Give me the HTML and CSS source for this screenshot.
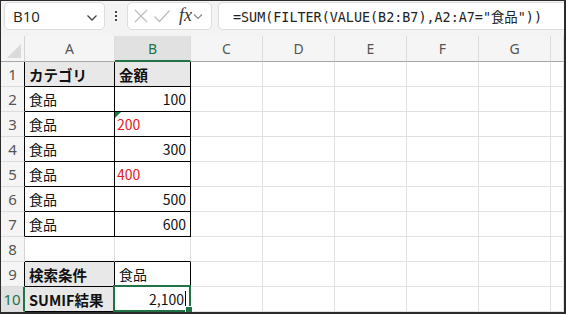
FILE: index.html
```html
<!DOCTYPE html>
<html lang="ja">
  <head>
    <meta charset="utf-8" />
    <title>SUMIF</title>
    <link rel="stylesheet" href="styles.css">
  </head>
  <body>
    <div class="frame">
      <div class="toolbar">
        <div class="namebox">
          <span>B10</span>
          <svg class="chev" width="12" height="8" viewBox="0 0 12 8"><path d="M1.5 1.5 L6 6 L10.5 1.5" fill="none" stroke="#444" stroke-width="1.3"/></svg>
        </div>
        <div class="dots">
          <i></i><i></i><i></i>
        </div>
        <div class="fxbox">
          <svg width="16" height="16" viewBox="0 0 16 16"><path d="M2 2 L14 14 M14 2 L2 14" stroke="#bdbdbd" stroke-width="1.3"/></svg>
          <svg width="18" height="16" viewBox="0 0 18 16"><path d="M1.5 8.5 L6.5 13.5 L16.5 2.5" fill="none" stroke="#bdbdbd" stroke-width="1.3"/></svg>
          <span class="fx">fx</span>
          <svg class="chev-sm" width="10" height="7" viewBox="0 0 10 7"><path d="M1 1.5 L5 5.5 L9 1.5" fill="none" stroke="#888" stroke-width="1.2"/></svg>
        </div>
        <div class="formula">=SUM(FILTER(VALUE(B2:B7),A2:A7="食品"))</div>
      </div>

      <div class="sheet">
        <div class="corner"><span class="tri"></span></div>
        <div class="ch">A</div>
        <div class="ch sel">B</div>
        <div class="ch">C</div>
        <div class="ch">D</div>
        <div class="ch">E</div>
        <div class="ch">F</div>
        <div class="ch">G</div>
        <div class="ch"></div>

        <div class="rh edge">1</div>
        <div class="c t hd">カテゴリ</div>
        <div class="c t hd">金額</div>
        <div class="c"></div><div class="c"></div><div class="c"></div><div class="c"></div><div class="c"></div><div class="c"></div>

        <div class="rh edge">2</div>
        <div class="c t">食品</div>
        <div class="c t num">100</div>
        <div class="c"></div><div class="c"></div><div class="c"></div><div class="c"></div><div class="c"></div><div class="c"></div>

        <div class="rh edge">3</div>
        <div class="c t">食品</div>
        <div class="c t red err">200</div>
        <div class="c"></div><div class="c"></div><div class="c"></div><div class="c"></div><div class="c"></div><div class="c"></div>

        <div class="rh edge">4</div>
        <div class="c t">食品</div>
        <div class="c t num">300</div>
        <div class="c"></div><div class="c"></div><div class="c"></div><div class="c"></div><div class="c"></div><div class="c"></div>

        <div class="rh edge">5</div>
        <div class="c t">食品</div>
        <div class="c t red">400</div>
        <div class="c"></div><div class="c"></div><div class="c"></div><div class="c"></div><div class="c"></div><div class="c"></div>

        <div class="rh edge">6</div>
        <div class="c t">食品</div>
        <div class="c t num">500</div>
        <div class="c"></div><div class="c"></div><div class="c"></div><div class="c"></div><div class="c"></div><div class="c"></div>

        <div class="rh edge">7</div>
        <div class="c t">食品</div>
        <div class="c t num">600</div>
        <div class="c"></div><div class="c"></div><div class="c"></div><div class="c"></div><div class="c"></div><div class="c"></div>

        <div class="rh">8</div>
        <div class="c bt"></div>
        <div class="c bt"></div>
        <div class="c"></div><div class="c"></div><div class="c"></div><div class="c"></div><div class="c"></div><div class="c"></div>

        <div class="rh edge">9</div>
        <div class="c t hd">検索条件</div>
        <div class="c t">食品</div>
        <div class="c"></div><div class="c"></div><div class="c"></div><div class="c"></div><div class="c"></div><div class="c"></div>

        <div class="rh sel-row">10</div>
        <div class="c t hd">SUMIF結果</div>
        <div class="c t num active">2,100<span class="cursor"></span><span class="handle"></span></div>
        <div class="c"></div><div class="c"></div><div class="c"></div><div class="c"></div><div class="c"></div><div class="c"></div>
      </div>
    </div>
  </body>
</html>
```

FILE: styles.css
```css
html, body {
  margin: 0;
  padding: 0;
  background: #ffffff;
  overflow: hidden;
}

.frame {
  width: 566px;
  height: 314px;
  box-sizing: border-box;
  border-style: solid;
  border-color: #2b2b2b;
  border-width: 1px 2px 2px 1px;
  display: flex;
  flex-direction: column;
  font-family: "Noto Sans CJK JP", sans-serif;
}

/* formula bar */
.toolbar {
  height: 35px;
  box-sizing: border-box;
  background: #f3f3f3;
  display: flex;
  align-items: flex-start;
  padding: 1px 0 0 3px;
}

.namebox {
  width: 101px;
  height: 28px;
  box-sizing: border-box;
  background: #fff;
  border: 1px solid #dcdcdc;
  border-radius: 5px;
  display: flex;
  align-items: center;
  justify-content: space-between;
  padding: 0 6px 0 8px;
  font-family: "Open Sans", "Noto Sans", sans-serif;
  font-size: 15px;
  color: #222;
}

.chev {
  margin-top: 3px;
}

.dots {
  width: 22px;
  height: 28px;
  display: flex;
  flex-direction: column;
  align-items: center;
  justify-content: center;
  gap: 2px;
}

.dots i {
  display: block;
  width: 2px;
  height: 2px;
  background: #444;
}

.fxbox {
  width: 85px;
  height: 28px;
  box-sizing: border-box;
  background: #fff;
  border: 1px solid #dcdcdc;
  border-radius: 5px;
  display: flex;
  align-items: center;
  padding: 0 4px 0 5px;
  gap: 4px;
}

.fx {
  font-family: "Liberation Serif", serif;
  font-style: italic;
  font-size: 18px;
  color: #333;
  margin-left: 4px;
  margin-top: -2px;
}

.chev-sm {
  margin-left: -3px;
}

.formula {
  flex: 1;
  height: 28px;
  margin-left: 6px;
  box-sizing: border-box;
  background: #fff;
  border: 1px solid #dcdcdc;
  border-right: none;
  border-radius: 5px 0 0 5px;
  padding: 0 0 0 14px;
  display: flex;
  align-items: center;
  font-family: "DejaVu Sans Mono", "Noto Sans CJK JP", monospace;
  font-size: 13.4px;
  color: #222;
  white-space: nowrap;
  overflow: hidden;
}

/* grid */
.sheet {
  flex: 1;
  display: grid;
  grid-template-columns: 24px 90px 76px 72px 72px 72px 72px 72px 1fr;
  grid-template-rows: 26px repeat(10, 25px);
  overflow: hidden;
}

.corner {
  background: #f5f5f5;
  border-right: 1px solid #d4d4d4;
  border-bottom: 1px solid #a6a6a6;
  position: relative;
}

.tri {
  position: absolute;
  right: 3px;
  bottom: 3px;
  width: 0;
  height: 0;
  border-left: 14px solid transparent;
  border-bottom: 14px solid #dadada;
}

.ch {
  background: #f5f5f5;
  border-right: 1px solid #dcdcdc;
  border-bottom: 1px solid #a6a6a6;
  display: flex;
  align-items: center;
  justify-content: center;
  font-family: "Noto Sans", sans-serif;
  font-size: 14px;
  color: #555;
}

.ch.sel {
  background: #e1e1e1;
  color: #217346;
  border-bottom: 2px solid #217346;
}

.rh {
  background: #f5f5f5;
  border-right: 1px solid #d4d4d4;
  border-bottom: 1px solid #dcdcdc;
  display: flex;
  align-items: center;
  justify-content: center;
  font-family: "Noto Sans", sans-serif;
  font-size: 15px;
  color: #555;
}

.rh.edge {
  border-right-color: #000;
}

.rh.sel-row {
  background: #e1e1e1;
  color: #217346;
  border-right: 2px solid #217346;
}

.c {
  box-sizing: border-box;
  border-right: 1px solid #e1e1e1;
  border-bottom: 1px solid #e1e1e1;
  display: flex;
  align-items: center;
  padding: 0 4px 0 4px;
  font-size: 14px;
  color: #111;
  white-space: nowrap;
  position: relative;
}

.c.t {
  border-right-color: #000;
  border-bottom-color: #000;
}

.c.bt {
  border-bottom-color: #000;
}

.c.hd {
  background: #e8e8e8;
  font-weight: bold;
  font-size: 14.5px;
}

.c.num {
  justify-content: flex-end;
}

.c.red {
  color: #e0201e;
  padding-left: 2px;
}

.c.err::before {
  content: "";
  position: absolute;
  left: 0;
  top: 0;
  border-top: 6px solid #1e7a3c;
  border-right: 6px solid transparent;
}

.c.active::after {
  content: "";
  position: absolute;
  left: -2px;
  top: -2px;
  right: -1px;
  bottom: -1px;
  border: 2px solid #217346;
}

.cursor {
  display: block;
  width: 1px;
  height: 17px;
  background: #000;
  margin-left: 1px;
}

.handle {
  position: absolute;
  right: -3px;
  bottom: -3px;
  width: 6px;
  height: 6px;
  background: #217346;
  border: 1px solid #fff;
  z-index: 2;
}
```
